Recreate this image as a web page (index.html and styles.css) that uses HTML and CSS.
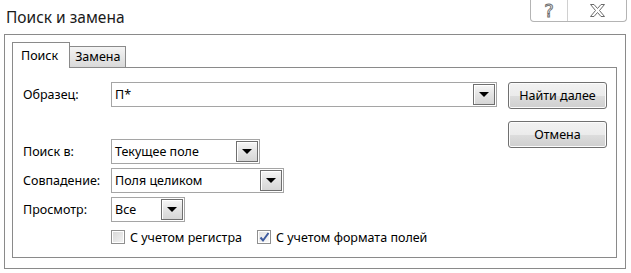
FILE: index.html
```html
<!DOCTYPE html>
<html lang="ru">
<head>
    <meta charset="UTF-8">
    <title>Поиск и замена</title>
    <link rel="stylesheet" href="styles.css">
</head>
<body>
    <div class="dialog">
        <div class="titlebar">
            <div class="title">Поиск и замена</div>
            <div class="caption-buttons">
                <div class="cap-btn help"><span class="help-glyph">?</span></div>
                <div class="cap-btn close">
                    <svg width="17" height="13" viewBox="0 0 17 13">
                        <polygon points="1.5,0.5 5,0.5 8.5,4.5 12,0.5 15.5,0.5 10.5,6.5 15.5,12.5 12,12.5 8.5,8.5 5,12.5 1.5,12.5 6.5,6.5" fill="#fff" stroke="#6b6b6b" stroke-width="1"/>
                    </svg>
                </div>
            </div>
        </div>
        <div class="frame">
            <div class="tabs">
                <div class="tab active">Поиск</div>
                <div class="tab">Замена</div>
            </div>
            <div class="panel">
                <div class="form">
                    <div class="row pattern">
                        <label class="label">Образец:</label>
                        <div class="combo w-pattern">
                            <span class="combo-text">П*</span>
                            <span class="drop"><i class="arrow"></i></span>
                        </div>
                    </div>
                    <div class="row">
                        <label class="label">Поиск в:</label>
                        <div class="combo w-where">
                            <span class="combo-text">Текущее поле</span>
                            <span class="drop"><i class="arrow"></i></span>
                        </div>
                    </div>
                    <div class="row">
                        <label class="label">Совпадение:</label>
                        <div class="combo w-match">
                            <span class="combo-text">Поля целиком</span>
                            <span class="drop"><i class="arrow"></i></span>
                        </div>
                    </div>
                    <div class="row">
                        <label class="label">Просмотр:</label>
                        <div class="combo w-look">
                            <span class="combo-text">Все</span>
                            <span class="drop"><i class="arrow"></i></span>
                        </div>
                    </div>
                    <div class="row checks">
                        <span class="label"></span>
                        <label class="check first">
                            <span class="box"></span>
                            С учетом регистра
                        </label>
                        <label class="check">
                            <span class="box checked">
                                <svg width="11" height="11" viewBox="0 0 11 11">
                                    <path d="M1.5,5.5 L4,8.5 L9.5,1" fill="none" stroke="#3d5a9e" stroke-width="2"/>
                                </svg>
                            </span>
                            С учетом формата полей
                        </label>
                    </div>
                </div>
                <div class="actions">
                    <button class="btn">Найти далее</button>
                    <button class="btn">Отмена</button>
                </div>
            </div>
        </div>
    </div>
</body>
</html>
```

FILE: styles.css
```css
body {
    margin: 0;
    background: #fff;
    font-family: 'Noto Sans', 'Open Sans', sans-serif;
    font-size: 12.5px;
    color: #000;
}
.dialog {
    width: 631px;
    height: 273px;
}
.titlebar {
    display: flex;
    justify-content: space-between;
    height: 34px;
}
.title {
    font-size: 15.5px;
    line-height: 34px;
    padding-left: 6px;
    color: #1a1a1a;
}
.caption-buttons {
    display: flex;
    height: 22px;
    margin-right: 4px;
    border: 1px solid #b4b4b4;
    border-top: none;
    border-radius: 0 0 4px 4px;
    box-sizing: border-box;
}
.cap-btn {
    display: flex;
    align-items: center;
    justify-content: center;
}
.help {
    width: 36px;
    border-right: 1px solid #d0d0d0;
}
.close {
    width: 58px;
}
.help-glyph {
    font-family: 'DejaVu Sans', sans-serif;
    font-size: 18px;
    color: #fff;
    -webkit-text-stroke: 0.9px #6b6b6b;
    line-height: 1;
}
.frame {
    margin-left: 4px;
    width: 622px;
    height: 235px;
    border: 1px solid #8a8a8a;
    box-sizing: border-box;
    padding: 8px 8px 0 7px;
}
.tabs {
    display: flex;
    align-items: flex-end;
    height: 24px;
    position: relative;
    z-index: 1;
}
.tab {
    height: 20px;
    padding: 0 5px;
    border: 1px solid #8a8a8a;
    border-bottom: none;
    border-left: none;
    background: linear-gradient(#f4f4f4, #d9d9d9);
    line-height: 20px;
}
.tab.active {
    height: 25px;
    margin-bottom: -1px;
    padding: 0 11px 0 8px;
    border-left: 1px solid #8a8a8a;
    background: #fff;
    line-height: 25px;
}
.panel {
    display: flex;
    width: 605px;
    height: 191px;
    border: 1px solid #8a8a8a;
    box-sizing: border-box;
    padding: 14px 0 0 10px;
}
.form {
    display: flex;
    flex-direction: column;
    gap: 4px;
}
.row {
    display: flex;
    align-items: center;
    height: 25px;
}
.row.pattern {
    margin-bottom: 28px;
}
.row.checks {
    height: 20px;
    margin-top: 1px;
}
.label {
    width: 88px;
    flex: none;
}
.combo {
    display: flex;
    align-items: center;
    height: 25px;
    border: 1px solid #a5a5a5;
    box-sizing: border-box;
    background: #fff;
}
.combo-text {
    flex: 1;
    padding-left: 3px;
}
.w-pattern { width: 386px; }
.w-where { width: 149px; }
.w-match { width: 173px; }
.w-look { width: 74px; }
.drop {
    display: flex;
    align-items: center;
    justify-content: center;
    width: 22px;
    height: 21px;
    margin: 0 1px 0 0;
    border: 1px solid #6f6f6f;
    box-sizing: border-box;
    box-shadow: inset 1px 1px 0 #fff;
    background: linear-gradient(#f6f6f6, #e4e4e4 50%, #d6d6d6);
}
.arrow {
    width: 0;
    height: 0;
    border-left: 5px solid transparent;
    border-right: 5px solid transparent;
    border-top: 5px solid #000;
}
.check {
    display: flex;
    align-items: center;
    gap: 5px;
}
.check.first {
    width: 146px;
}
.box {
    display: flex;
    align-items: center;
    justify-content: center;
    width: 14px;
    height: 14px;
    border: 1px solid #8f8f8f;
    box-sizing: border-box;
    background: linear-gradient(135deg, #d6d6d6, #f4f4f4);
    box-shadow: inset 0 0 0 1px #fff;
}
.box.checked {
    background: linear-gradient(135deg, #e2e2e2, #fafafa);
}
.actions {
    display: flex;
    flex-direction: column;
    gap: 12px;
    margin-left: 11px;
}
.btn {
    width: 99px;
    height: 27px;
    padding: 0;
    border: 1px solid #707070;
    border-radius: 3px;
    background: linear-gradient(#f2f2f2, #ebebeb 50%, #dddddd 50%, #cfcfcf);
    box-shadow: inset 0 0 0 1px #fcfcfc;
    font-family: 'Noto Sans', 'Open Sans', sans-serif;
    font-size: 12.5px;
    color: #000;
}
```
